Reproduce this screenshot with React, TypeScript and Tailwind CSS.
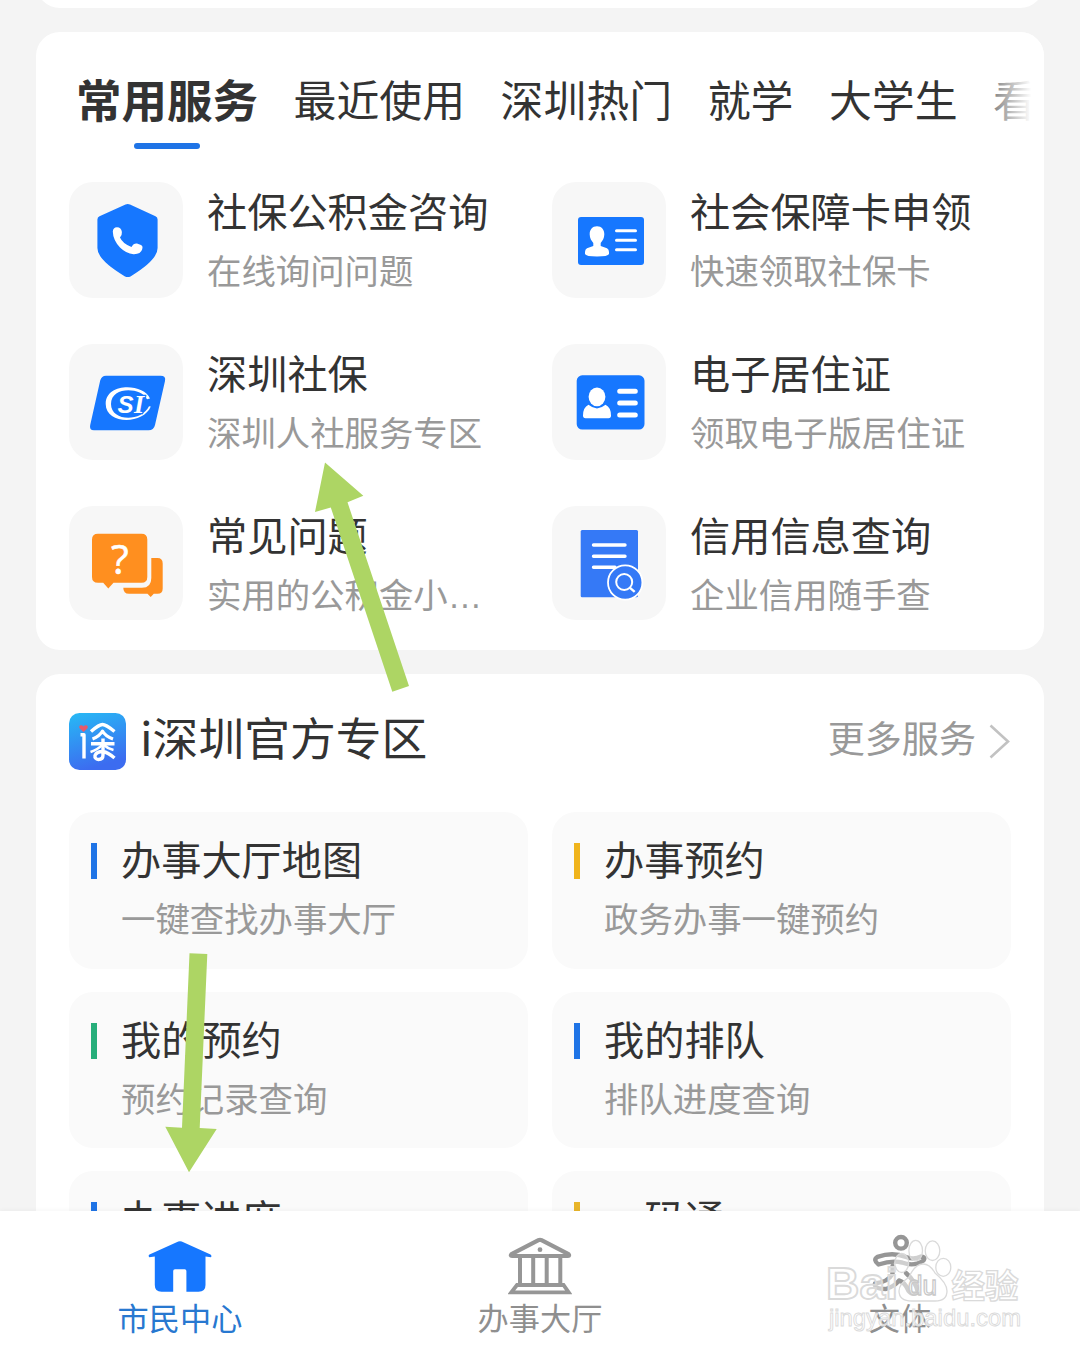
import type { ReactNode } from 'react';

type Servico = {
    titulo: string;
    descricao: string;
    reticencias?: boolean;
    icone: ReactNode;
};

type Zona = {
    titulo: string;
    descricao: string;
    cor: string;
};

const AZUL = '#1677ff';
const CINZA = '#969696';

function IconeEscudo() {
    return (
        <svg viewBox="0 0 114 116" className="w-[114px] h-[116px]">
            <path d="M56.5 22.4 Q58.7 21.4 61 22.4 L86.5 34.2 Q88.6 35.3 88.6 37.5 V66 Q88.6 78 61.5 94.4 Q58.7 95.6 56 94.4 Q28.4 78 28.4 66 V37.5 Q28.4 35.3 30.5 34.2 Z" fill={AZUL} />
            <path d="M43.8 49.5 Q44 45.4 48 45.2 Q52.3 45.2 52.9 50 Q53.2 53.2 51 55.5 Q53.5 61.5 62.5 65 Q64.6 61.2 68 61.6 L72 63.1 Q74.2 64.2 73.2 67.3 Q71.8 72.4 64.5 72.2 Q57 71.5 51 65.5 Q44 58 43.8 49.5 Z" fill="white" />
        </svg>
    );
}

function IconeCartao() {
    return (
        <svg viewBox="0 0 114 116" className="w-[114px] h-[116px]">
            <rect x="26" y="35" width="66" height="48" rx="3" fill={AZUL} />
            <path d="M45 44.3 C49.8 44.3 52.5 48 52.3 52.5 C52.2 56 50.8 58.5 48.7 61 V64 L55 66.3 Q57 67.3 57 70 V72 Q56 74.5 45 74.5 Q34 74.5 33 72 V70 Q33 67.3 35 66.3 L41.3 64 V61 C39.2 58.5 37.8 56 37.7 52.5 C37.5 48 40.2 44.3 45 44.3 Z" fill="white" />
            <path d="M64.5 48.7 H83.5 M64.5 58.3 H83.5 M64.5 67.8 H83.5" stroke="white" strokeWidth="3" strokeLinecap="round" />
        </svg>
    );
}

function IconeSeguro() {
    return (
        <svg viewBox="0 0 114 116" className="w-[114px] h-[116px]">
            <path d="M37 31.7 H91.5 Q97.2 31.7 96 37 L86 81 Q84.8 86.3 79.5 86.3 H25 Q20 86.3 21.2 81 L31.2 36.5 Q32.5 31.7 37 31.7 Z" fill={AZUL} />
            <path d="M81 54.5 C75 39.5 36.7 38 36.7 60 C36.7 80.5 74 81 81.8 62.5 L80 62.3 C72 78.5 42 77.5 42 60 C42 42 72 43 78 55.2 Z" fill="white" />
            <text x="48.5" y="68.5" fill="white" stroke={AZUL} strokeWidth="2.4" paintOrder="stroke" fontFamily="Liberation Sans" fontSize="24" fontWeight="700" fontStyle="italic">
                S
            </text>
            <text x="65" y="68.5" fill="white" stroke={AZUL} strokeWidth="2.4" paintOrder="stroke" fontFamily="Liberation Serif" fontSize="26" fontWeight="700" fontStyle="italic">
                I
            </text>
        </svg>
    );
}

function IconeResidencia() {
    return (
        <svg viewBox="0 0 114 116" className="w-[114px] h-[116px]">
            <rect x="24.7" y="31.3" width="67.8" height="54.2" rx="5.5" fill={AZUL} />
            <path d="M36.5 60.8 Q45 68 53.5 60.8 Q59 63.5 59 71.5 Q59 74.2 56.5 74.2 H33.5 Q31 74.2 31 71.5 Q31 63.5 36.5 60.8 Z" fill="white" />
            <ellipse cx="45" cy="52.8" rx="8.4" ry="9.4" fill="white" />
            <path d="M67.7 47.3 H83.3 M67.7 59.1 H83.3 M67.7 71.1 H83.3" stroke="white" strokeWidth="5" strokeLinecap="round" />
        </svg>
    );
}

function IconePergunta() {
    return (
        <svg viewBox="0 0 114 116" className="w-[114px] h-[116px]">
            <path d="M29 27.7 H72.5 Q78.3 27.7 78.3 33.5 V71 Q78.3 76.8 72.5 76.8 H44.5 L39.3 82.5 L34.2 76.8 H29 Q23 76.8 23 71 V33.5 Q23 27.7 29 27.7 Z" fill="#ff8f1f" />
            <path d="M82.3 52 H88.5 Q93.7 52 93.7 57.5 V82.5 Q93.7 87.8 88.5 87.8 H84.8 L81.7 91 L78.5 87.8 H60 Q54.3 87.8 54.3 81.8 H73 Q82.3 81.8 82.3 72 Z" fill="#ff8f1f" />
            <text x="50.8" y="67.5" textAnchor="middle" fill="white" stroke="white" strokeWidth="0.6" fontFamily="Open Sans" fontSize="41">?</text>
        </svg>
    );
}

function IconeCredito() {
    return (
        <svg viewBox="0 0 114 116" className="w-[114px] h-[116px]">
            <rect x="28.7" y="24" width="57.3" height="67.3" rx="1.5" fill="#3579f6" />
            <path d="M41.5 39 H73 M41.5 50.2 H73 M41.5 61.3 H63" stroke="white" strokeWidth="3.4" strokeLinecap="round" />
            <circle cx="73.2" cy="76.5" r="17.2" fill="#3579f6" stroke="white" strokeWidth="1.8" />
            <circle cx="72.2" cy="76" r="8" fill="none" stroke="white" strokeWidth="2" />
            <path d="M78 81.8 L82.7 85.8" stroke="white" strokeWidth="2.4" />
        </svg>
    );
}

function LogoShen() {
    return (
        <svg viewBox="0 0 57 57" className="w-[57px] h-[57px]">
            <defs>
                <linearGradient id="fundoLogo" x1="0" y1="0" x2="0.3" y2="1">
                    <stop offset="0" stopColor="#27baf5" />
                    <stop offset="1" stopColor="#3c6cf0" />
                </linearGradient>
            </defs>
            <rect width="57" height="57" rx="10.5" fill="url(#fundoLogo)" />
            <path d="M14.5 19 L10.5 15.2 Q9.5 12.6 12 12.3 Q13.7 12.3 14.5 13.6 Q15.3 12.3 17 12.3 Q19.5 12.6 18.5 15.2 Z" fill="#e8596b" />
            <g fill="none" stroke="white" strokeWidth="3.4" strokeLinejoin="round">
                <path d="M11.5 21.8 H15 V45.5" />
                <path d="M22 18.5 Q30 11.5 33.5 11.5 Q37 11.5 45.5 18.5" />
                <path d="M23.5 26 Q31 23 33.5 18 Q36 23 44 26" strokeWidth="3" />
                <path d="M22 30.8 H45.5 M34 25.5 V42 Q34 46.5 29.5 46.5 Q25.5 46 26 42.5 Q27.5 38.5 34 38.5 Q39 39.5 45.5 45" />
                <path d="M33 32 Q29 36.5 21.5 39 M35 32 Q38.5 35.5 44.5 37" strokeWidth="2.6" />
            </g>
        </svg>
    );
}

function IconeCasa() {
    return (
        <svg viewBox="0 0 64 60" className="w-16 h-[60px]">
            <path d="M30.3 5.6 Q32 4.7 33.7 5.6 L62.5 18.5 Q64 19.5 63 21.3 L57.5 20.5 V49 Q57.5 55.8 50.5 55.8 H38.4 V35 Q38.4 33.3 36.7 33.3 H27 Q25.2 33.3 25.2 35 V55.8 H13.5 Q6.8 55.8 6.8 49 V20.5 L1.2 21.3 Q0 19.5 1.5 18.5 Z" fill={AZUL} />
        </svg>
    );
}

function IconeSalao() {
    return (
        <svg viewBox="0 0 64 60" className="w-16 h-[60px]" fill="none" stroke={CINZA}>
            <path d="M30.5 4.2 Q32 3.4 33.5 4.2 L60.5 18.2 Q62 20 60 20 H4 Q2 20 3.5 18.2 Z" strokeWidth="4.2" strokeLinejoin="round" />
            <circle cx="32" cy="13.7" r="2.4" fill={CINZA} stroke="none" />
            <path d="M12 21 V48 M25.2 21 V48 M38.7 21 V48 M52.3 21 V48" strokeWidth="4" />
            <path d="M9 49 H55.5 L60.7 56.3 H3.3 Z" strokeWidth="3.8" />
        </svg>
    );
}

function IconeCorredor() {
    return (
        <svg viewBox="0 0 64 60" className="w-16 h-[60px] overflow-visible" fill="none" stroke={CINZA} strokeWidth="4.4" strokeLinecap="round" strokeLinejoin="round">
            <circle cx="33" cy="6.8" r="5.8" />
            <path d="M10.5 28.5 Q4.5 24 9.5 20.8 Q25 15.5 38 21 Q46 24 53 20.5 Q58 21 55.5 24.5 Q46 31 34 26.5 Q24 24 10.5 28.5 Z" />
            <path d="M24.5 30 V38 Q20 46 7 47.5 Q6 53 18 53 Q27 50 31 44.5 Q37 46 40.5 55 Q44 59.5 50 56.5 Q48 46 38 37" />
        </svg>
    );
}

const abas = ['最近使用', '深圳热门', '就学', '大学生', '看'];

const servicos: Servico[] = [
    { titulo: '社保公积金咨询', descricao: '在线询问问题', icone: <IconeEscudo /> },
    { titulo: '社会保障卡申领', descricao: '快速领取社保卡', icone: <IconeCartao /> },
    { titulo: '深圳社保', descricao: '深圳人社服务专区', icone: <IconeSeguro /> },
    { titulo: '电子居住证', descricao: '领取电子版居住证', icone: <IconeResidencia /> },
    { titulo: '常见问题', descricao: '实用的公积金小', reticencias: true, icone: <IconePergunta /> },
    { titulo: '信用信息查询', descricao: '企业信用随手查', icone: <IconeCredito /> },
];

const zonas: Zona[] = [
    { titulo: '办事大厅地图', descricao: '一键查找办事大厅', cor: 'bg-[#1f74e6]' },
    { titulo: '办事预约', descricao: '政务办事一键预约', cor: 'bg-[#f0b41c]' },
    { titulo: '我的预约', descricao: '预约记录查询', cor: 'bg-[#27ae7a]' },
    { titulo: '我的排队', descricao: '排队进度查询', cor: 'bg-[#1f74e6]' },
    { titulo: '办事进度', descricao: '', cor: 'bg-[#1f74e6]' },
    { titulo: '一码通', descricao: '', cor: 'bg-[#e8b52a]' },
];

// Setas verdes por cima da lista
function Setas() {
    return (
        <svg viewBox="0 0 1080 1355" className="absolute inset-0 w-[1080px] h-[1355px] pointer-events-none" fill="#add564">
            <polygon points="325,462.5 363.3,495.7 347.5,502.3 409,686 392.3,691.7 330.8,507.5 315,512" />
            <polygon points="189.5,953.3 207.3,954 199.7,1128 216.7,1129 189,1172.3 165.3,1126.7 182,1127.7" />
        </svg>
    );
}

function MarcaDagua() {
    return (
        <svg viewBox="0 0 220 110" className="absolute left-[820px] top-[1235px] w-[220px] h-[110px] pointer-events-none" fill="white" fillOpacity="0.55" stroke="#dadada" strokeWidth="1.3">
            <ellipse cx="81.7" cy="28" rx="7" ry="9.5" />
            <ellipse cx="95.7" cy="15.7" rx="6.8" ry="10.3" />
            <ellipse cx="112.5" cy="15.7" rx="7.3" ry="9.8" />
            <ellipse cx="123.3" cy="32.3" rx="7.5" ry="9" />
            <path d="M103 29 Q110 29 115 38 Q127 48 127 56 Q127 66 115 66 H92 Q79 66 79 56 Q79 49 89 42 Q95 29 103 29 Z" />
            <g fontFamily="Liberation Sans" fontWeight="700">
                <text x="6" y="64" fontSize="44" strokeWidth="1.8" textLength="72" lengthAdjust="spacingAndGlyphs">Bai</text>
                <text x="88" y="60" fontSize="27" fontWeight="400" stroke="#c8c8c8" textLength="29" lengthAdjust="spacingAndGlyphs">du</text>
            </g>
            <text x="131.5" y="62.5" fontSize="33.5" fontFamily="Noto Sans CJK SC" fontWeight="700">经验</text>
            <text x="9" y="91" fontSize="24" fontFamily="Liberation Sans" fillOpacity="0.8" strokeWidth="0.9" textLength="192" lengthAdjust="spacingAndGlyphs">jingyan.baidu.com</text>
        </svg>
    );
}

export default function App() {
    return (
        <div className="relative w-[1080px] h-[1355px] overflow-hidden bg-[#f4f4f4] text-[#333333] font-['Noto_Sans_CJK_SC',sans-serif]">

            <main className="h-[1211px] overflow-hidden px-9">
                <div className="-mt-10 h-12 bg-white rounded-b-3xl" />

                <section className="relative mt-6 h-[618px] bg-white rounded-3xl overflow-hidden">
                    <div className="flex h-[150px] pl-[40px] pt-[41px] gap-[35.5px] whitespace-nowrap text-[42.9px] leading-[50px]">
                        <div className="flex flex-col items-center text-[45.5px] font-bold">
                            <span>常用服务</span>
                            <span className="mt-5 w-[66px] h-1.5 rounded-full bg-[#1f74e6]" />
                        </div>
                        {abas.map((aba) => (
                            <span key={aba}>{aba}</span>
                        ))}
                    </div>
                    <div className="absolute right-0 top-0 w-[84px] h-[112px] bg-linear-to-r from-white/15 from-20% to-white to-85%" />

                    <div className="grid grid-cols-[459px_459px] gap-x-6 gap-y-[46px] pl-[33px]">
                        {servicos.map((servico, i) => (
                            <div key={servico.titulo} className="flex h-[116px] gap-6 whitespace-nowrap">
                                <div className={`w-[114px] shrink-0 overflow-hidden rounded-3xl bg-[#f7f7f7] ${i > 3 ? 'h-[114px]' : 'h-full'}`}>
                                    {servico.icone}
                                </div>
                                <div className="pt-2">
                                    <h3 className="text-[40.2px] leading-10">{servico.titulo}</h3>
                                    <p className="mt-[21px] text-[34.4px] leading-9 text-[#999999]">
                                        {servico.descricao}
                                        {servico.reticencias && <span className="font-['Liberation_Sans',sans-serif]">…</span>}
                                    </p>
                                </div>
                            </div>
                        ))}
                    </div>
                </section>

                <section className="mt-6 h-[700px] bg-white rounded-3xl px-[33px] pt-[39px]">
                    <div className="flex h-[57px]">
                        <LogoShen />
                        <h2 className="ml-[14px] text-[45.8px] leading-[46px]">i深圳官方专区</h2>
                        <div className="ml-auto flex text-[37.1px] leading-[48px] text-[#999999]">
                            更多服务
                            <svg viewBox="0 0 22 36" className="ml-[13px] mt-[11px] w-[22px] h-9" fill="none" stroke="#c2c2c2" strokeWidth="2.6">
                                <path d="M1.5 1.5 L19 17.5 L1.5 33.5" />
                            </svg>
                        </div>
                    </div>

                    <div className="mt-[42px] grid grid-cols-2 gap-x-6 gap-y-[23px]">
                        {zonas.map((zona) => (
                            <div key={zona.titulo} className="flex h-[156.5px] rounded-3xl bg-[#fafafa] pl-[22px] pt-[26px] whitespace-nowrap">
                                <span className={`mt-[5px] w-1.5 h-9 ${zona.cor}`} />
                                <div className="ml-6">
                                    <h3 className="text-[40.2px] leading-10">{zona.titulo}</h3>
                                    <p className="mt-[21px] text-[34.4px] leading-9 text-[#999999]">{zona.descricao}</p>
                                </div>
                            </div>
                        ))}
                    </div>
                </section>
            </main>

            <nav className="relative grid grid-cols-3 h-36 bg-white pt-[25px] shadow-[0_-1px_4px_rgba(0,0,0,0.04)] text-[31.2px] leading-9 text-[#8f8f8f]">
                <div className="flex flex-col items-center gap-[3px] text-[#2878d0]">
                    <IconeCasa />
                    <span>市民中心</span>
                </div>
                <div className="flex flex-col items-center gap-[3px]">
                    <IconeSalao />
                    <span>办事大厅</span>
                </div>
                <div className="flex flex-col items-center gap-[3px]">
                    <IconeCorredor />
                    <span>文体</span>
                </div>
            </nav>

            <Setas />
            <MarcaDagua />
        </div>
    );
}
